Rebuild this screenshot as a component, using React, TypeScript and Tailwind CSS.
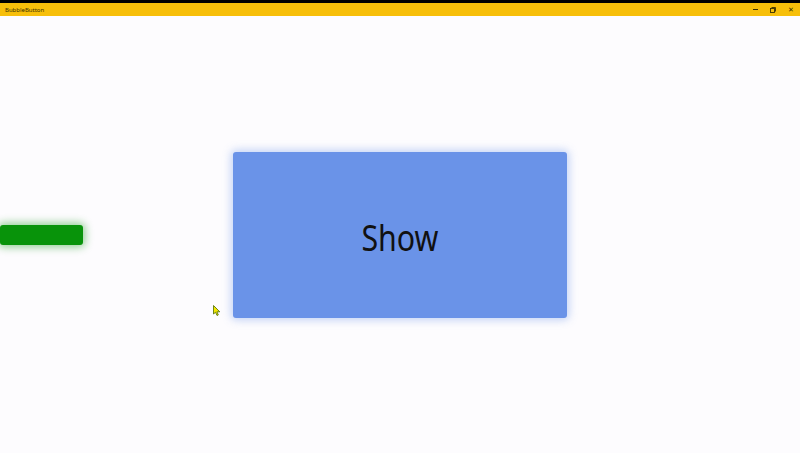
export default function App() {
  return (
    <div className="relative flex h-[453px] w-[800px] flex-col overflow-hidden bg-[#fdfcfe] font-['Noto_Sans',sans-serif]">
      <div className="h-[3px] bg-black" />
      {/* Title bar */}
      <div className="flex h-[13px] items-center justify-between bg-[#f7bf0a] pl-[5px]">
        <span className="text-[6px] leading-none text-[#3a3000]">BubbleButton</span>
        <div className="flex h-full items-center">
          <span className="flex w-[18px] justify-center">
            <span className="block h-px w-[5px] bg-[#3a3000]" />
          </span>
          <span className="flex w-[18px] justify-center">
            <svg width="6" height="6" viewBox="0 0 6 6">
              <rect x="0.5" y="1.5" width="4" height="4" fill="none" stroke="#3a3000" strokeWidth="0.9" />
              <path d="M1.5 0.5 H5.5 V4.5" fill="none" stroke="#3a3000" strokeWidth="0.9" />
            </svg>
          </span>
          <span className="flex w-[18px] justify-center text-[7px] leading-none text-[#3a3000]">✕</span>
        </div>
      </div>

      {/* Content */}
      <div className="grid flex-1 grid-cols-[1fr_auto_1fr] items-center">
        <div className="justify-self-start">
          <div className="h-[20px] w-[83px] rounded-[3px] bg-[#08930a] shadow-[0_0_8px_2px_rgba(8,147,10,0.45)]" />
        </div>
        <div className="flex h-[166px] w-[334px] items-center justify-center rounded-[3px] bg-[#6a93e8] shadow-[0_0_8px_2px_rgba(106,147,232,0.4)]">
          <span className="inline-block translate-y-[2px] scale-x-[0.82] text-[37px] leading-none text-[#111]">Show</span>
        </div>
        <div />
      </div>

      {/* Cursor */}
      <svg className="absolute left-[213px] top-[305px]" width="8" height="11" viewBox="0 0 8 11">
        <path d="M0.5 0.5 L0.5 9 L2.5 7.3 L4 10.5 L5.3 9.9 L3.9 6.8 L6.8 6.8 Z" fill="#f2e600" stroke="#4a6a00" strokeWidth="0.8" />
      </svg>
    </div>
  );
}
